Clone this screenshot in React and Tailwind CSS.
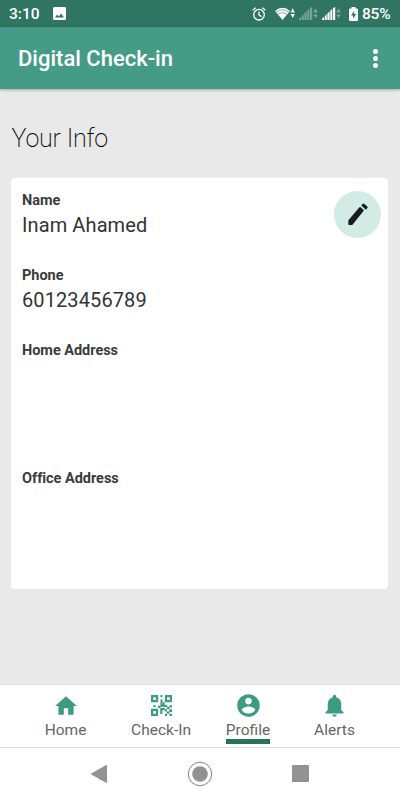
const fields = [
  { label: "Name", value: "Inam Ahamed", height: "h-[75px]" },
  { label: "Phone", value: "60123456789", height: "h-[75px]" },
  { label: "Home Address", value: "", height: "h-32" },
  { label: "Office Address", value: "", height: "h-28" },
];

const tabs = [
  { name: "Home", width: "w-[95px]", icon: HomeIcon },
  { name: "Check-In", width: "w-24", icon: QrIcon },
  { name: "Profile", width: "w-[78px]", icon: ProfileIcon, active: true },
  { name: "Alerts", width: "w-[95px]", icon: BellIcon },
];

function HomeIcon() {
  return (
    <svg viewBox="0 0 24 24" className="size-[26px]" fill="currentColor">
      <path d="M10 20v-6h4v6h5v-8h3L12 3 2 12h3v8z" />
    </svg>
  );
}

function QrIcon() {
  return (
    <svg viewBox="0 0 20.5 20.5" className="size-[21px]" fill="currentColor">
      <path
        fillRule="evenodd"
        d="M0 0h7v7H0zM2.200 2.200v2.600h2.600V2.200zM13.500 0h7v7h-7zM15.700 2.200v2.600h2.600V2.200zM0 13.500h7v7H0zM2.200 15.700v2.600h2.600v-2.600z"
      />
      <path d="M9.200 0h2v2.300h-2zM9.200 4.500h2v4.800h-2zM2.300 10h2.300v2H2.300zM6.800 10.500h2.400v2.200H6.800zM9.200 9.300h2.200v2.200H9.200zM11.400 7h2v2.500h-2zM11.400 9.500h4.500v2.200h-4.500zM18 10h2.500v2.200H18zM9 12.700h4.500V15H9zM9 15h2.200v3.500H9zM15.500 11.700H18V14h-2.500zM13.500 14h2v2.200h-2zM15.500 16.200H18v2.200h-2.500zM18 14h2.500v2.500H18zM13.500 18.400h2.200v2.100h-2.200zM18 18.400h2.500v2.100H18z" />
    </svg>
  );
}

function ProfileIcon() {
  return (
    <svg viewBox="0 0 24 24" className="size-[27px]" fill="currentColor">
      <path d="M12 2C6.48 2 2 6.48 2 12s4.48 10 10 10 10-4.480 10-10S17.520 2 12 2zm0 3c1.660 0 3 1.340 3 3s-1.340 3-3 3-3-1.340-3-3 1.340-3 3-3zm0 14.200c-2.500 0-4.710-1.280-6-3.220.030-1.990 4-3.080 6-3.080 1.990 0 5.970 1.090 6 3.080-1.290 1.940-3.500 3.220-6 3.220z" />
    </svg>
  );
}

function BellIcon() {
  return (
    <svg viewBox="0 0 24 24" className="size-[27px]" fill="currentColor">
      <path d="M12 22c1.100 0 2-.9 2-2h-4c0 1.100.890 2 2 2zm6-6v-5c0-3.070-1.640-5.640-4.500-6.320V4c0-.830-.670-1.500-1.500-1.500s-1.500.670-1.500 1.500v.680C7.630 5.360 6 7.920 6 11v5l-2 2v1h16v-1l-2-2z" />
    </svg>
  );
}

function PencilIcon() {
  return (
    <svg viewBox="0 0 20 23" className="w-5 h-[23px]" fill="#1b1b1f">
      <path d="M.4 17.200 11.200 4.400q.7-.8 1.500-.1l2.700 2.400q.7.600.1 1.300L4.700 21.500q-.4.500-1 .5H1.100q-.8 0-.8-.8v-3q0-.6.100-1z" />
      <path d="M13.300 2.500 14.600.9q.8-.8 1.600-.1L19.300 3.500q.8.7.1 1.500L17.900 6.800z" />
    </svg>
  );
}

function Signal({ dim }) {
  return (
    <svg viewBox="0 0 19 14" className="w-[19px] h-3.5" fill="white">
      <g opacity={dim ? 0.35 : 1}>
        <path d="M0 11.500l2-1.500v3H0zM2.700 9.300l2-2V13h-2zM5.400 6.600l2.200-2.200V13H5.400zM8.300 3.700l2-2V13h-2zM11 1l2.200-1v13H11z" />
      </g>
      <path opacity=".38" d="m16.500 1.500 2.300 4h-4.600zM14.200 7.500h4.600l-2.300 3.500z" />
    </svg>
  );
}

function StatusBar() {
  return (
    <div className="flex h-[27px] items-center bg-[#307562] pl-[9px] pr-[9px] text-white">
      <span className="w-[32px] pt-px text-[15.500px] font-medium leading-[26px] whitespace-nowrap">3:10</span>
      <svg viewBox="0 0 13 13" className="ml-3 size-[13px]" fill="white">
        <path
          fillRule="evenodd"
          d="M1.500 0h10Q13 0 13 1.500v10q0 1.500-1.500 1.500h-10Q0 13 0 11.500v-10Q0 0 1.500 0zM2 10.500h9L8 6.400l-2.200 3-1.600-1.900z"
        />
      </svg>
      <div className="ml-auto flex items-center">
        <svg viewBox="0 0 14 14" className="size-3.5" fill="none" stroke="white" strokeWidth="1.300">
          <circle cx="7" cy="7.700" r="5.300" />
          <path d="M.6 3.300 3.700.7M13.400 3.300 10.300.7M7 4.500v3.500l2.500 1.600" />
        </svg>
        <svg viewBox="0 0 20 14" className="ml-[9px] w-5 h-3.5" fill="white">
          <path d="M0 4Q7.500-2.400 15 4L7.500 13z" />
          <path d="M1.200 5.200q6.300-4.800 12.600 0M3 7.300q4.500-3.200 9 0" fill="none" stroke="#307562" strokeWidth=".6" />
          <path d="m17.700 1.200 2.100 4.300h-4.200zM15.600 7h4.200l-2.100 4z" />
        </svg>
        <div className="ml-1 flex gap-1">
          <Signal dim />
          <Signal />
        </div>
        <svg viewBox="0 0 9 14" className="ml-[8px] w-[9px] h-3.5" fill="white">
          <path d="M2.500 0h4v1.500H8q1 0 1 1V13q0 1-1 1H1q-1 0-1-1V2.500q0-1 1-1h1.500z" />
          <path d="M5.300 3.700 2 8.500h2.100v3.200L7.300 7H5.100z" fill="#307562" />
        </svg>
        <span className="ml-1 w-[29px] pt-px text-[15.500px] font-medium leading-[26px] tracking-[-0.200px] whitespace-nowrap">85%</span>
      </div>
    </div>
  );
}

export default function App() {
  return (
    <div className="flex h-[800px] w-[400px] flex-col overflow-hidden bg-[#e9e9e9] font-['Roboto',sans-serif]">
      <StatusBar />
      <header className="flex h-[62px] items-center justify-between bg-[#459c86] pl-[18px] pr-[22px] text-white shadow-[0_1px_3px_rgba(0,0,0,0.3)]">
        <h1 className="pt-[2px] text-[22px] font-medium leading-[60px]">Digital Check-in</h1>
        <div className="flex flex-col gap-[2px]">
          <span className="size-[5px] rounded-full bg-white" />
          <span className="size-[5px] rounded-full bg-white" />
          <span className="size-[5px] rounded-full bg-white" />
        </div>
      </header>

      <main className="flex-1 px-[11px] pt-[35px]">
        <h2 className="pl-[0.500px] text-[25px] font-extralight leading-[30px] tracking-[-0.200px] text-black">Your Info</h2>
        <section className="mt-6 mr-px flex h-[411px] justify-between rounded-[4px] bg-white pl-[11px] pr-[7px] pt-[13px]">
          <div className="pt-px">
            {fields.map((field) => (
              <div key={field.label} className={field.height}>
                <div className="text-[14.500px] font-bold leading-[18px] tracking-[-0.030px] text-[#3b3b3b]">{field.label}</div>
                <div className="mt-[3px] text-[20px] leading-6 tracking-[0.100px] text-[#333]">{field.value}</div>
              </div>
            ))}
          </div>
          <button className="flex size-[47px] items-center justify-center rounded-full bg-[#d2ebe5]">
            <PencilIcon />
          </button>
        </section>
      </main>

      <nav className="flex h-16 justify-center border-y border-[#dedede] bg-white">
        {tabs.map(({ name, width, icon: Icon, active }) => (
          <div key={name} className={`${width} flex flex-col items-center pt-[7px]`}>
            <div className="flex h-[27px] items-center text-[#3d9b83]">
              <Icon />
            </div>
            <span className="mt-[3px] text-[15.500px] leading-[17px] text-[#666]">{name}</span>
            {active && <span className="h-[5px] w-11 bg-[#26735b]" />}
          </div>
        ))}
      </nav>

      <footer className="flex h-[52px] items-center justify-between bg-white pb-px pl-[91px] pr-[91px]">
        <svg viewBox="0 0 16 18" className="w-4 h-[18px]" fill="#929292">
          <path d="M15.200 0Q16 0 16 .8v16.400q0 1-.9.5L.3 9.500q-.6-.5 0-1z" />
        </svg>
        <svg viewBox="0 0 26 26" className="size-[26px]">
          <circle cx="13" cy="13" r="11.700" fill="none" stroke="#808080" strokeWidth="1" />
          <circle cx="13" cy="13" r="7.800" fill="#929292" />
        </svg>
        <span className="size-[17px] rounded-[1px] bg-[#929292]" />
      </footer>
    </div>
  );
}
